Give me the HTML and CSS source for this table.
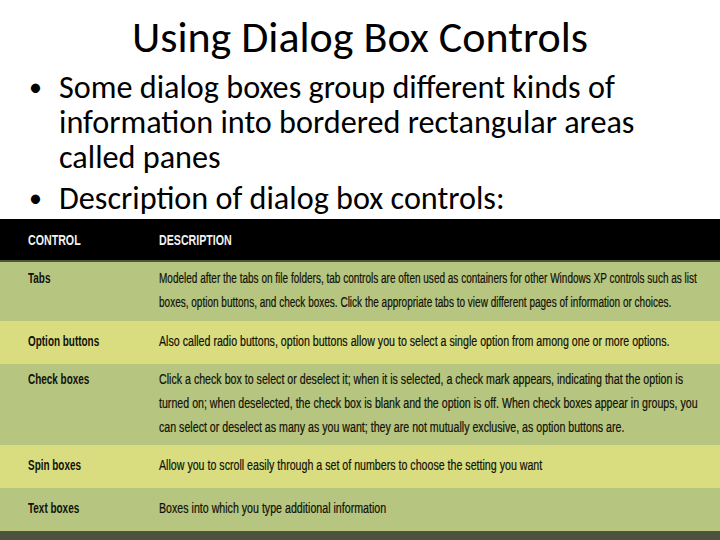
FILE: index.html
```html
<!DOCTYPE html>
<html>
<head>
<meta charset="utf-8">
<link rel="stylesheet" href="styles.css">
</head>
<body>
<div class="slide">
  <h1 class="title">Using Dialog Box Controls</h1>
  <ul class="bullets">
    <li class="item"><span class="dot">•</span><span class="txt">Some dialog boxes group different kinds of information into bordered rectangular areas called panes</span></li>
    <li class="item"><span class="dot">•</span><span class="txt">Description of dialog box controls:</span></li>
  </ul>
  <div class="table">
    <div class="row head">
      <div class="c1"><span class="sq">CONTROL</span></div>
      <div class="c2"><span class="sq">DESCRIPTION</span></div>
    </div>
    <div class="row green multi tabs">
      <div class="c1"><span class="sq">Tabs</span></div>
      <div class="c2"><span class="ln tight">Modeled after the tabs on file folders, tab controls are often used as containers for other Windows XP controls such as list</span><span class="ln tight">boxes, option buttons, and check boxes. Click the appropriate tabs to view different pages of information or choices.</span></div>
    </div>
    <div class="row yellow single">
      <div class="c1"><span class="sq">Option buttons</span></div>
      <div class="c2"><span class="ln">Also called radio buttons, option buttons allow you to select a single option from among one or more options.</span></div>
    </div>
    <div class="row green multi">
      <div class="c1"><span class="sq">Check boxes</span></div>
      <div class="c2"><span class="ln">Click a check box to select or deselect it; when it is selected, a check mark appears, indicating that the option is</span><span class="ln">turned on; when deselected, the check box is blank and the option is off. When check boxes appear in groups, you</span><span class="ln">can select or deselect as many as you want; they are not mutually exclusive, as option buttons are.</span></div>
    </div>
    <div class="row yellow single">
      <div class="c1"><span class="sq">Spin boxes</span></div>
      <div class="c2"><span class="ln">Allow you to scroll easily through a set of numbers to choose the setting you want</span></div>
    </div>
    <div class="row green single last">
      <div class="c1"><span class="sq">Text boxes</span></div>
      <div class="c2"><span class="ln">Boxes into which you type additional information</span></div>
    </div>
    <div class="foot"></div>
  </div>
</div>
</body>
</html>
```

FILE: styles.css
```css
* { box-sizing: border-box; }
html, body { margin: 0; padding: 0; background: #fff; }
.slide {
  width: 720px;
  height: 540px;
  overflow: hidden;
  display: flex;
  flex-direction: column;
  font-family: Carlito, Lato, "Open Sans", sans-serif;
  color: #000;
}
.title {
  margin: 0;
  padding-top: 13px;
  font-weight: normal;
  font-size: 44px;
  line-height: 48px;
  text-align: center;
}
.bullets {
  list-style: none;
  margin: 9px 0 0 0;
  padding: 0;
  font-size: 32.2px;
  line-height: 35px;
}
.item {
  display: grid;
  grid-template-columns: 59px 1fr;
  padding-right: 40px;
}
.item + .item { margin-top: 6px; }
.dot { padding-left: 29px; font-size: 26px; }
.table {
  margin-top: 3px;
  font-family: "Liberation Sans", Arial, sans-serif;
  font-size: 14px;
  color: #111108;
}
.row {
  display: grid;
  grid-template-columns: 159px minmax(0, 1fr);
}
.c1 { padding-left: 28px; font-weight: bold; line-height: 24px; }
.c2 { min-width: 0; }
.sq {
  display: inline-block;
  white-space: nowrap;
  transform: scaleX(0.71);
  transform-origin: 0 50%;
}
.ln {
  display: block;
  white-space: nowrap;
  line-height: 24px;
  transform: scaleX(0.76);
  transform-origin: 0 50%;
  -webkit-text-stroke: 0.2px #111108;
}
.ln.tight { transform: scaleX(0.715); }
.head {
  background: #000;
  color: #f0f0f0;
  height: 43px;
  align-items: center;
  border-bottom: 2px solid #4f5636;
  font-weight: bold;
  font-size: 15px;
}
.head .c2 { font-weight: bold; }
.green { background: #b6c57f; }
.yellow { background: #d9dc7f; }
.multi { padding: 3px 0 6px; }
.single { padding: 8px 0 11px; }
.tabs { padding: 4px 0 7px; }
.foot { height: 12px; background: #4d523e; }
```
